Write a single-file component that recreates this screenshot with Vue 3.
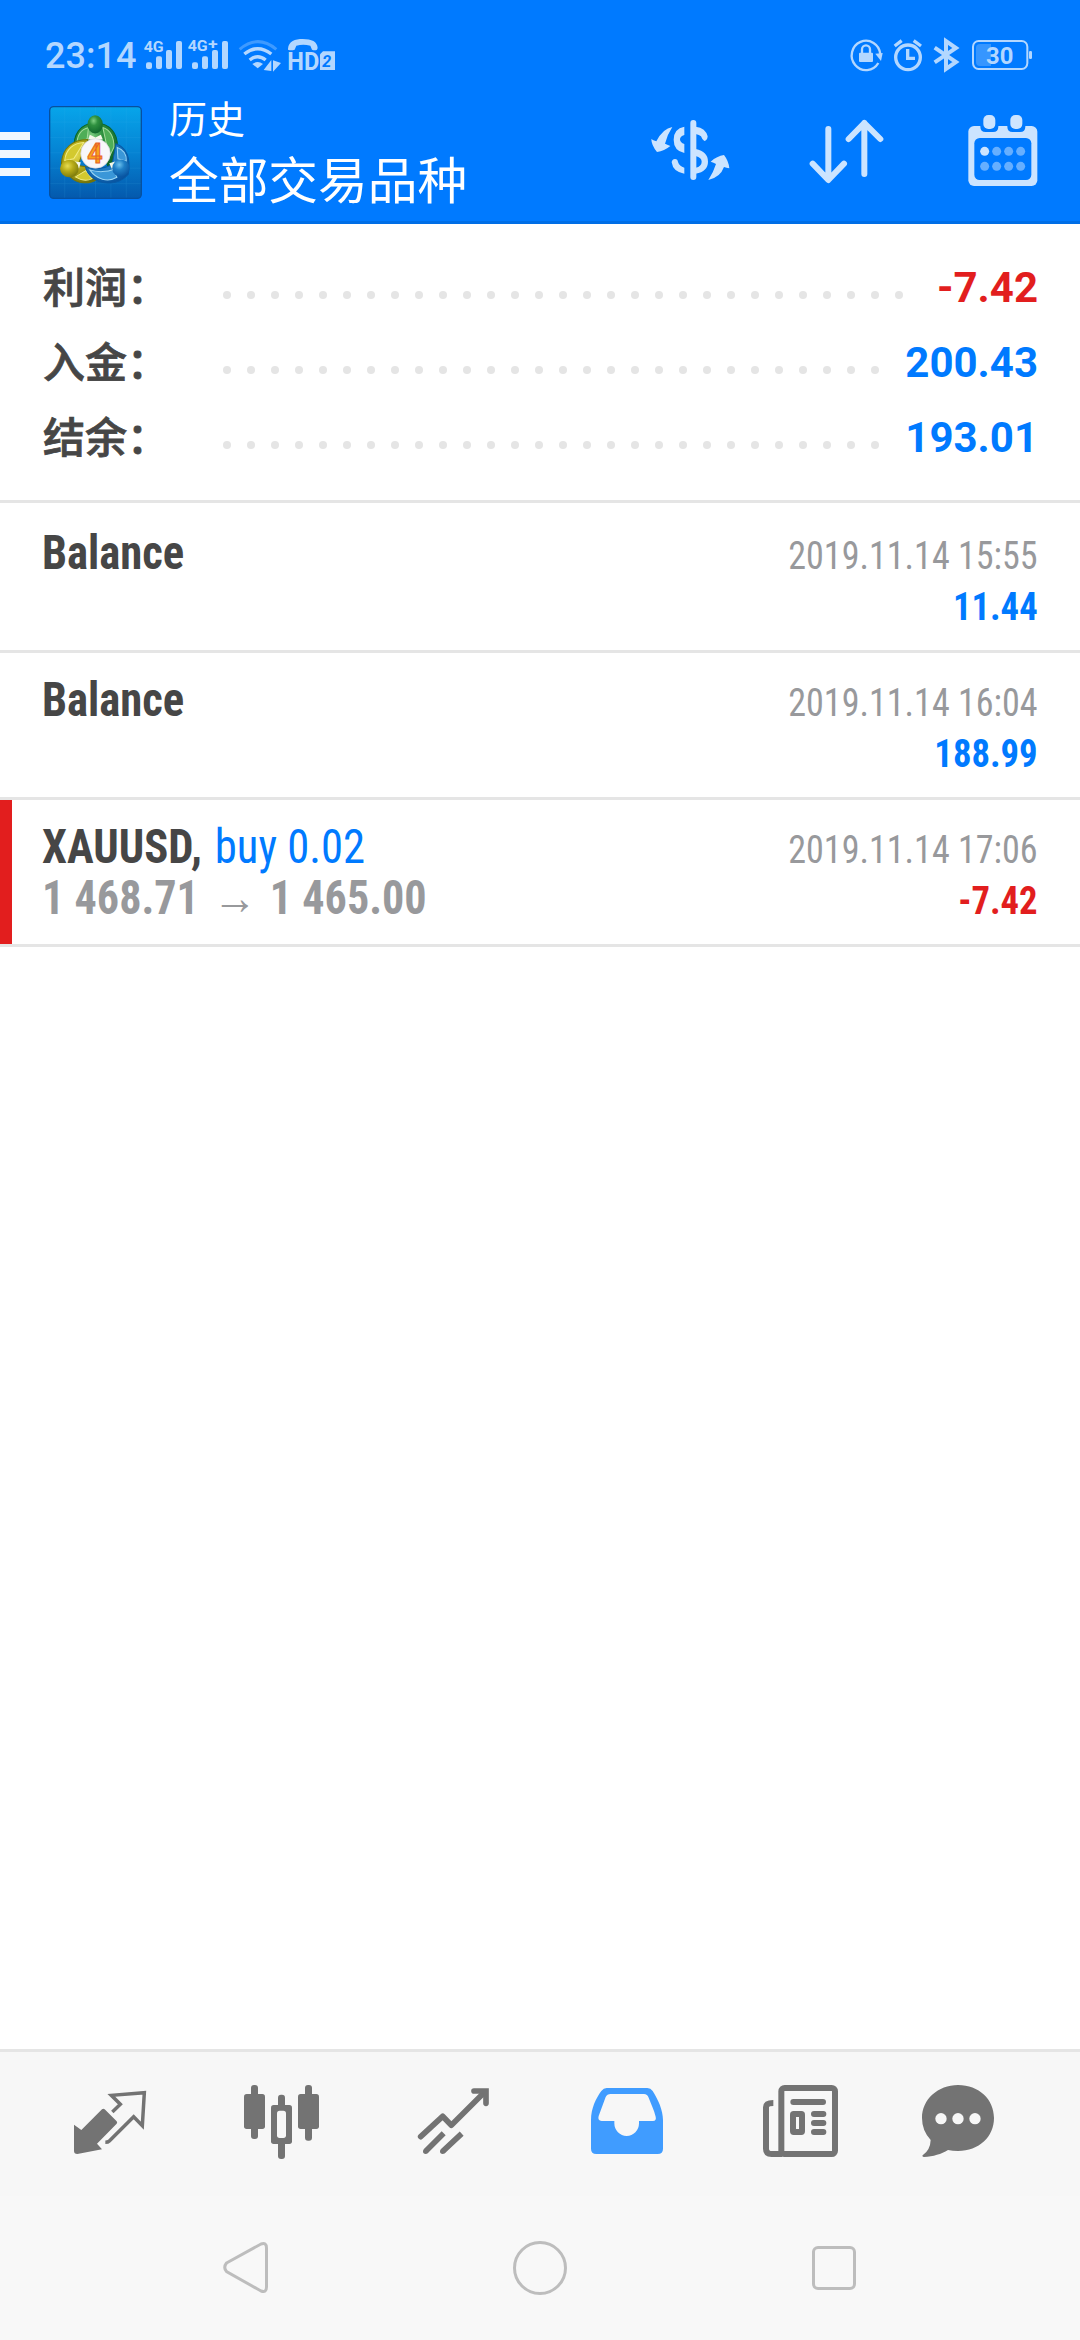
<script setup>
const summary = [
  { label: '利润：', value: '-7.42', dots: 29, tone: 'red' },
  { label: '入金：', value: '200.43', dots: 28, tone: 'blue' },
  { label: '结余：', value: '193.01', dots: 28, tone: 'blue' },
]
const deals = [
  { title: 'Balance', date: '2019.11.14 15:55', value: '11.44', tone: 'blue' },
  { title: 'Balance', date: '2019.11.14 16:04', value: '188.99', tone: 'blue' },
  { title: 'XAUUSD,', side: 'buy 0.02', open: '1 468.71', close: '1 465.00', date: '2019.11.14 17:06', value: '-7.42', tone: 'red' },
]
</script>

<template>
  <div class="screen">
    <header class="header">
      <div class="status">
        <span class="clock">23:14</span>
        <svg class="status-left" viewBox="420 30 600 135" width="200" height="45">
          <g class="pale">
            <text x="431" y="95" font-size="42" font-weight="700" textLength="60" lengthAdjust="spacingAndGlyphs">4G</text>
            <rect x="438" y="127" width="18" height="20" rx="6" />
            <rect x="468" y="109" width="18" height="38" rx="6" />
            <rect x="498" y="90" width="18" height="57" rx="6" />
            <rect x="528" y="63" width="18" height="84" rx="6" />
            <text x="563" y="93" font-size="42" font-weight="700" textLength="60" lengthAdjust="spacingAndGlyphs">4G</text>
            <text x="624" y="86" font-size="46" font-weight="700" textLength="29" lengthAdjust="spacingAndGlyphs">+</text>
            <rect x="576" y="127" width="18" height="20" rx="6" />
            <rect x="606" y="109" width="18" height="38" rx="6" />
            <rect x="636" y="90" width="18" height="57" rx="6" />
            <rect x="666" y="63" width="18" height="84" rx="6" />
            <path d="M757 132Q773 120 789 132L773 145Z" />
            <path d="M791 150L814 120V153ZM819 121L843 129L819 155Z" />
            <path d="M864 86C866 63 885 57 908 57C935 57 952 65 953 84L951 89Q945 92 936 89L931 77Q910 71 889 77L884 89Q873 92 864 89Z" />
            <text x="862" y="150" font-size="77" font-weight="700" textLength="96" lengthAdjust="spacingAndGlyphs">HD</text>
            <path d="M969 94H1005V150H960V103Z" />
          </g>
          <text x="967" y="140" font-size="48" font-weight="700" font-style="italic" fill="#007aff">2</text>
          <g class="pale-line">
            <path d="M719 88Q773 42 829 88" stroke-width="9" opacity=".35" />
            <path d="M733 102Q773 70 814 102" stroke-width="10" />
            <path d="M749 120Q773 100 797 120" stroke-width="10" />
          </g>
        </svg>
        <svg class="status-right" viewBox="45 30 570 135" width="190" height="45">
          <g class="pale-line">
            <path d="M151 103A43 44 0 1 0 145 129" stroke-width="7" />
            <path d="M96 100V88A12 12 0 0 1 120 88V100" stroke-width="7" />
            <circle cx="234" cy="112" r="37" stroke-width="10" />
            <path d="M233 87V115H255" stroke-width="10" />
            <path d="M194 78L215 62M251 62L273 78" stroke-width="10" />
            <path d="M314 83L378 126L348 147V63L378 84L314 127" stroke-width="12" />
            <rect x="429" y="63" width="163" height="84" rx="17" stroke-width="6" />
          </g>
          <g class="pale">
            <rect x="87" y="98" width="42" height="28" rx="3" />
            <path d="M136 101L158 99L153 123Z" />
            <path d="M438 84Q438 72 450 72H483V138H450Q438 138 438 126Z" opacity=".3" />
            <rect x="597" y="93" width="9" height="24" rx="4" />
            <text x="468" y="131" font-size="69" font-weight="700" textLength="82" lengthAdjust="spacingAndGlyphs">30</text>
          </g>
        </svg>
      </div>
      <div class="toolbar">
        <div class="menu"><i /><i /><i /></div>
        <svg class="logo" viewBox="29 32 278 278" width="93" height="93">
          <defs>
            <linearGradient id="sky" x1="0" y1="0" x2="0" y2="1"><stop offset="0" stop-color="#07a5ea" /><stop offset=".5" stop-color="#0583d3" /><stop offset="1" stop-color="#0459ad" /></linearGradient>
            <radialGradient id="green" cx=".4" cy=".3" r=".75"><stop offset="0" stop-color="#7fd083" /><stop offset=".35" stop-color="#2f9140" /><stop offset="1" stop-color="#0d642a" /></radialGradient>
            <radialGradient id="gold" cx=".4" cy=".35" r=".75"><stop offset="0" stop-color="#e6dc52" /><stop offset=".4" stop-color="#b8ac18" /><stop offset="1" stop-color="#6f700a" /></radialGradient>
            <radialGradient id="azure" cx=".4" cy=".3" r=".75"><stop offset="0" stop-color="#6cc1ee" /><stop offset=".4" stop-color="#1f7fc6" /><stop offset="1" stop-color="#07529f" /></radialGradient>
          </defs>
          <rect x="31" y="34" width="274" height="274" rx="12" fill="url(#sky)" stroke="#07509f" stroke-width="4" />
          <path d="M76 36V306M122 36V306M168 36V306M214 36V306M260 36V306M33 80H303M33 126H303M33 172H303M33 218H303M33 264H303" stroke="#45b5ef" stroke-width="1.5" opacity=".25" />
          <path d="M103 165C101 118 120 84 168 83C213 84 235 116 233 152C232 183 220 204 204 211L190 150L150 132Z" fill="url(#green)" stroke="#08632b" stroke-width="3" />
          <path d="M112 148C113 119 126 101 147 97L143 130ZM190 96C213 103 224 127 223 155L209 185Z" fill="#4fae57" stroke="#a5dc9c" stroke-width="3" />
          <path d="M146 132C100 131 68 158 66 205L92 243C115 267 150 266 174 251L150 215L115 210Z" fill="url(#gold)" stroke="#777607" stroke-width="3" />
          <path d="M133 141C103 142 79 162 76 195L103 190ZM108 244Q135 261 158 249L139 225Z" fill="#d3c92f" stroke="#f1ec86" stroke-width="3" />
          <path d="M229 145C260 156 274 184 266 236C239 269 184 270 157 245Q142 231 138 214C166 221 191 222 218 207Z" fill="url(#azure)" stroke="#085aa6" stroke-width="3" />
          <path d="M233 156C252 163 262 178 260 197L235 190ZM151 223C174 231 204 229 222 222L232 245C205 261 171 252 151 223Z" fill="#3a97d8" stroke="#9bd6f5" stroke-width="3" />
          <path d="M151 118L168 126L184 118L190 132H146ZM106 198L124 200L118 222ZM227 198L209 203L219 224Z" fill="#f4f8e8" />
          <ellipse cx="167" cy="87" rx="23" ry="27" fill="url(#green)" />
          <ellipse cx="90" cy="219" rx="28" ry="26" fill="url(#gold)" />
          <ellipse cx="244" cy="218" rx="26" ry="26" fill="url(#azure)" />
          <circle cx="168" cy="174" r="44" fill="#f7f7fa" stroke="#d5d5dd" stroke-width="2" />
          <text x="143" y="202" font-size="80" font-weight="700" fill="#f8a51d" stroke="#e8622b" stroke-width="3">4</text>
        </svg>
        <div class="titles">
          <div class="title">历史</div>
          <div class="subtitle">全部交易品种</div>
        </div>
        <svg class="actions" viewBox="80 30 1200 240" width="400" height="80">
          <g fill="#cce4ff">
            <rect x="210" y="60" width="18" height="180" rx="9" />
            <path d="M192 80Q160 86 160 119Q160 152 192 159V132Q179 128 179 118Q179 109 192 105ZM154 187Q155 178 164 177Q172 177 173 186Q177 199 192 203V221Q158 216 154 187ZM226 80Q256 84 262 109Q261 122 252 123Q246 120 242 109Q237 104 226 102ZM226 147Q263 155 263 185Q263 214 226 221V203Q244 199 244 185Q244 173 226 168Z" />
            <path d="M156 81Q128 85 108 124Q98 121 93 117Q93 135 110 156Q132 153 150 138Q140 134 134 131Q140 105 156 81ZM264 240Q280 215 287 192Q280 187 271 185Q290 168 311 165Q325 183 327 205Q318 203 311 201Q300 232 264 240Z" />
          </g>
          <path d="M624 87V239M577 191L624 240L671 191M732 69V222M685 117L732 69L780 117" fill="none" stroke="#cce4ff" stroke-width="18" stroke-linecap="round" stroke-linejoin="round" />
          <rect x="1044" y="78" width="207" height="180" rx="17" fill="#cce4ff" />
          <path d="M1080 70H1134V80Q1134 96 1118 96H1096Q1080 96 1080 80ZM1161 70H1215V80Q1215 96 1199 96H1177Q1161 96 1161 80Z" fill="#007aff" />
          <rect x="1062" y="114" width="171" height="126" rx="16" fill="#007aff" />
          <rect x="1089" y="45" width="36" height="42" rx="15" fill="#cce4ff" />
          <rect x="1170" y="45" width="36" height="42" rx="15" fill="#cce4ff" />
          <g fill="#66afff">
            <circle cx="1093" cy="154" r="13.5" fill="#cce4ff" /><circle cx="1129" cy="154" r="13.5" /><circle cx="1165" cy="154" r="13.5" /><circle cx="1201" cy="154" r="13.5" />
            <circle cx="1093" cy="199" r="13.5" /><circle cx="1129" cy="199" r="13.5" /><circle cx="1165" cy="199" r="13.5" /><circle cx="1201" cy="199" r="13.5" />
          </g>
        </svg>
      </div>
    </header>

    <section class="summary">
      <div v-for="row in summary" :key="row.label" class="sum-row">
        <span class="sum-label">{{ row.label }}</span>
        <span class="dots"><i v-for="n in row.dots" :key="n" /></span>
        <span class="sum-value" :class="row.tone">{{ row.value }}</span>
      </div>
    </section>

    <main class="deals">
      <article v-for="deal in deals" :key="deal.date" class="deal" :class="{ loss: deal.side }">
        <div class="left">
          <div class="name"><b>{{ deal.title }}</b><span v-if="deal.side" class="blue side">{{ deal.side }}</span></div>
          <div v-if="deal.open" class="prices"><span>{{ deal.open }}</span><span class="arrow">→</span><span>{{ deal.close }}</span></div>
        </div>
        <div class="right">
          <div class="date">{{ deal.date }}</div>
          <div class="value" :class="deal.tone">{{ deal.value }}</div>
        </div>
      </article>
    </main>

    <nav class="tabs">
      <svg viewBox="66 36 288 432">
        <path d="M102 254L124 270L186 208Q190 205 194 208L230 244Q233 248 230 251L171 311L186 328L112 342Q102 342 102 333Z" fill="#737373" />
        <path d="M217 216L241 193L214 166L313 158L307 257L281 230L208 303Q204 307 196 307" fill="none" stroke="#737373" stroke-width="10.5" />
      </svg>
      <svg viewBox="585 36 288 432" fill="#737373">
        <rect x="633" y="135" width="21" height="162" rx="9" /><rect x="612" y="162" width="63" height="105" rx="8" />
        <rect x="714" y="164" width="21" height="193" rx="9" /><rect x="693" y="195" width="63" height="117" rx="8" />
        <rect x="711" y="212" width="27" height="82" rx="8" fill="#f7f7f7" />
        <rect x="795" y="135" width="21" height="167" rx="9" /><rect x="774" y="162" width="63" height="105" rx="8" />
      </svg>
      <svg viewBox="1104 36 288 432" fill="none" stroke="#737373" stroke-width="17" stroke-linecap="round">
        <path d="M1142 290L1208 229L1234 256L1334 156" stroke-linejoin="round" />
        <path d="M1302 153H1338V190" />
        <circle cx="1157" cy="334" r="8" fill="#737373" stroke="none" /><circle cx="1208" cy="334" r="8" fill="#737373" stroke="none" />
        <path d="M1157 334L1211 280M1208 334L1265 281" stroke-linecap="butt" />
      </svg>
      <svg viewBox="63 36 288 432">
        <path d="M93 240C93 205 108 175 124 153Q131 144 140 144H262Q272 144 278 153C294 178 309 210 309 240V326Q309 342 293 342H109Q93 342 93 326ZM137 171L116 228Q112 242 125 243H163V250A37 38 0 0 0 237 250V243H279Q290 242 287 230C282 208 272 190 266 173Q262 162 252 162H152Q141 162 137 171Z" fill="#409cff" fill-rule="evenodd" />
      </svg>
      <svg viewBox="582 36 288 432" fill="none" stroke="#737373" stroke-width="18">
        <rect x="664" y="144" width="161" height="198" rx="10" />
        <path d="M640 189Q618 189 618 202V326Q618 342 635 342H666" />
        <rect x="699" y="222" width="27" height="54" rx="2" />
        <path d="M700 186H789M762 222H790M762 249H790M762 276H790" stroke-linecap="round" />
      </svg>
      <svg class="last" viewBox="1053 36 288 432" fill="#737373">
        <path d="M1194 135C1257 135 1302 178 1302 234C1302 290 1257 333 1194 333Q1178 333 1164 330C1144 342 1120 350 1092 351Q1085 350 1088 346Q1111 330 1112 300Q1086 272 1086 234C1086 178 1134 135 1194 135Z" />
        <g fill="#f7f7f7"><circle cx="1143" cy="236" r="17" /><circle cx="1194" cy="236" r="17" /><circle cx="1245" cy="236" r="17" /></g>
      </svg>
    </nav>

    <footer class="system">
      <svg width="48" height="56" viewBox="222 2240 48 56"><path d="M226.5 2263L261 2244Q266.5 2242 266.5 2248V2287Q266.5 2293 261 2291L226.5 2271.5Q223 2267.5 226.5 2263Z" /></svg>
      <svg width="56" height="56" viewBox="512 2240 56 56"><circle cx="540" cy="2268" r="25.5" /></svg>
      <svg width="48" height="56" viewBox="810 2240 48 56"><rect x="813.5" y="2247.5" width="41" height="41" rx="4.5" /></svg>
    </footer>
  </div>
</template>

<style>
body { background: #fff; }
</style>

<style scoped>
.screen { width: 1080px; height: 2340px; display: flex; flex-direction: column; overflow: hidden; background: #fff; font-family: Roboto, "Noto Sans CJK SC", sans-serif; color: #464646; }
svg { display: block; flex: none; }
.header { height: 224px; box-sizing: border-box; flex: none; background: #007aff; border-bottom: 3px solid #006ee6; }
.status { height: 100px; box-sizing: border-box; padding: 30px 45px 0 45px; display: flex; align-items: flex-start; }
.clock { width: 95px; font-size: 36px; font-weight: 500; line-height: 52px; color: #b3d7ff; white-space: nowrap; }
.status-right { margin-left: auto; }
.pale { fill: #b3d7ff; }
.pale-line { fill: none; stroke: #b3d7ff; }
.toolbar { height: 121px; display: flex; align-items: flex-start; }
.menu { width: 30px; padding-top: 32px; display: flex; flex-direction: column; gap: 10px; }
.menu i { height: 8px; background: #f0f7ff; }
.logo { margin: 6px 0 0 19px; }
.titles { margin-left: 27px; color: #fff; white-space: nowrap; }
.title { font-size: 38px; line-height: 40px; }
.subtitle { font-size: 49.7px; line-height: 60px; margin-top: 12px; }
.actions { margin: 10px 33px 0 auto; }
.summary { height: 279px; flex: none; box-sizing: border-box; padding: 26px 42px 0; border-bottom: 3px solid #e5e5e5; }
.sum-row { height: 75px; display: flex; align-items: center; font-size: 42px; font-weight: 700; }
.sum-label { width: 181px; box-sizing: border-box; padding: 1px 0 0 1px; font-weight: 500; -webkit-text-stroke: 0.8px #464646; line-height: 75px; white-space: nowrap; }
.dots { display: flex; gap: 16px; margin-top: 15px; }
.dots i { width: 8px; height: 8px; border-radius: 50%; background: #e5e5e5; }
.sum-value { margin-left: auto; }
.red { color: #e21e1e; }
.blue { color: #007aff; }
.deals { flex: 1; padding-top: 3px; }
.deal { height: 147px; box-sizing: border-box; padding: 21px 42px 0; border-bottom: 3px solid #e5e5e5; display: flex; justify-content: space-between; font-family: "Roboto Condensed", Roboto, sans-serif; font-stretch: 75%; white-space: nowrap; }
.loss { background: linear-gradient(90deg, #e21e1e 12px, transparent 12px) padding-box; }
.name, .prices { font-size: 48px; line-height: 51px; transform: scaleX(.93); transform-origin: left; }
.side { margin-left: 14px; }
.prices { font-weight: 700; color: #98999c; transform: scaleX(.92); }
.arrow { margin: 0 14px 0 15px; font-weight: 400; line-height: 0; font-family: "Noto Sans", sans-serif; }
.right { text-align: right; padding-top: 3.5px; }
.date, .value { font-size: 39px; line-height: 51px; transform: scaleX(.925); transform-origin: right; }
.date { color: #98999c; }
.value { font-weight: 700; transform: scaleX(.94); }
.tabs { height: 147px; flex: none; box-sizing: border-box; border-top: 3px solid #e5e5e5; background: #f7f7f7; display: flex; gap: 77px; padding-left: 62px; }
.tabs svg { width: 96px; height: 144px; }
.tabs .last { margin-left: -16px; }
.system { height: 144px; flex: none; box-sizing: border-box; background: #f8f8f8; display: flex; align-items: center; justify-content: space-between; padding: 0 222px; }
.system svg { fill: none; stroke: #bdbdbd; stroke-width: 3; }
</style>
